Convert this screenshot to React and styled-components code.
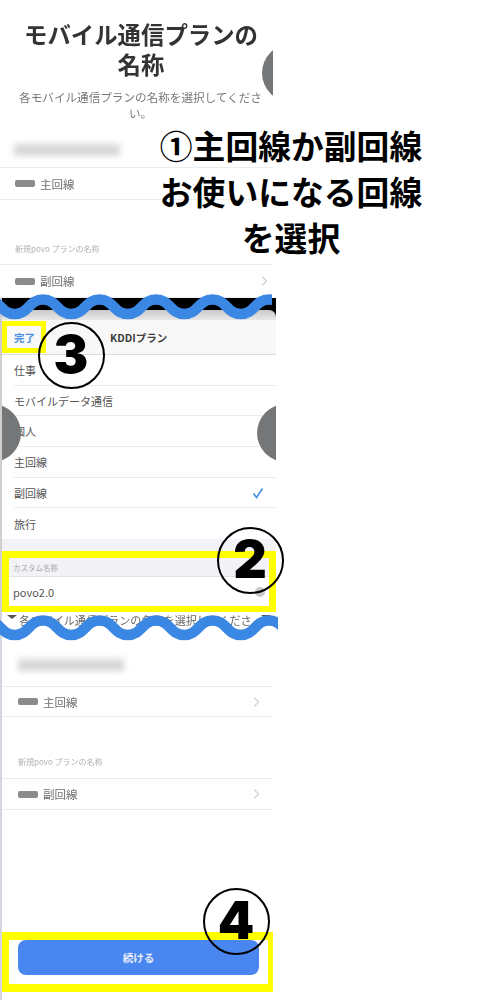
import React from "react";
import styled, { createGlobalStyle } from "styled-components";

const GlobalStyle = createGlobalStyle`
  html, body {
    margin: 0;
    background: #fff;
    font-family: "Noto Sans CJK JP", "Noto Sans", sans-serif;
  }
  * {
    box-sizing: border-box;
  }
`;

const Page = styled.div`
  position: relative;
  width: 500px;
  height: 1000px;
  overflow: hidden;
  background: #fff;
`;

const Shots = styled.div`
  display: flex;
  flex-direction: column;
  width: 276px;
`;

const ShotBlur = styled.div`
  filter: blur(0.45px);
`;

const TopShot = styled.section`
  position: relative;
  width: 273px;
  height: 298px;
  padding-top: 19px;
  overflow: hidden;
  background: #fff;
`;

const Title = styled.h1`
  margin: 0;
  padding-left: 9px;
  text-align: center;
  font-size: 23.4px;
  line-height: 30px;
  font-weight: 700;
  color: #333;
`;

const Sub = styled.p`
  margin: 10px 0 0;
  padding: 0 0 0 8px;
  text-align: center;
  font-size: 11.6px;
  line-height: 16px;
  color: #777;
  white-space: pre-line;
`;

const BlurBar = styled.div`
  width: 106px;
  height: 12px;
  margin: ${(p) => p.$margin};
  background: #c9c9c9;
  filter: blur(3px);
  opacity: 0.75;
`;

const PlanRow = styled.div`
  display: flex;
  align-items: center;
  height: ${(p) => p.$height}px;
  padding: 0 ${(p) => p.$right}px 0 ${(p) => p.$left}px;
  border-top: 1px solid #ececec;
  border-bottom: 1px solid #ececec;
  font-size: 11.5px;
  color: #6f6f6f;
`;

const Badge = styled.span`
  width: 20px;
  height: 7px;
  margin-right: 5px;
  border-radius: 2px;
  background: #8b8b8b;
`;

const PlanName = styled.span`
  flex: 1;
`;

const Chevron = styled.svg`
  width: 8px;
  height: 12px;
  fill: none;
  stroke: #d4d4d4;
  stroke-width: 1.3;
`;

const SmallLabel = styled.div`
  margin: ${(p) => p.$margin};
  font-size: 8px;
  line-height: 10px;
  color: #b0b0b0;
`;

const Modal = styled.section`
  position: relative;
  display: flex;
  flex-direction: column;
  height: 314px;
  overflow: hidden;
  background: #f2f2f7;
  border-left: 2px solid #cfcfcf;
`;

const ModalTop = styled.div`
  height: 22px;
  margin-left: -2px;
  padding-top: 12px;
  flex: none;
  background: #000;
`;

const ModalTopInner = styled.div`
  height: 10px;
  border-radius: 7px 7px 0 0;
  background: linear-gradient(#c9c9c9, #e8e8e8);
`;

const ModalHeader = styled.div`
  display: flex;
  align-items: center;
  flex: none;
  height: 35px;
  background: #f8f8f8;
  border-bottom: 1px solid #dcdcdc;
`;

const DoneButton = styled.div`
  display: flex;
  align-items: center;
  justify-content: center;
  width: 44px;
  height: 32px;
  padding-left: 1px;
  border: 5px solid #ffff00;
  font-size: 10.5px;
  font-weight: 700;
  color: #4a8fe0;
`;

const ModalTitle = styled.div`
  margin-left: 64px;
  font-size: 10.5px;
  font-weight: 700;
  color: #3d3d3d;
`;

const OptionList = styled.div`
  flex: none;
  padding-left: 12px;
  background: #fff;
`;

const Option = styled.div`
  display: flex;
  align-items: center;
  justify-content: space-between;
  height: 30.7px;
  padding-right: 12px;
  border-bottom: ${(p) => (p.$last ? "none" : "1px solid #ececec")};
  font-size: 11px;
  color: #555;
`;

const Check = styled.svg`
  width: 12px;
  height: 12px;
  fill: none;
  stroke: #4a8fe0;
  stroke-width: 1.6;
`;

const CustomField = styled.div`
  width: 274px;
  height: 62px;
  margin-top: 12px;
  flex: none;
  border: 7px solid #ffff00;
`;

const CustomLabel = styled.div`
  height: 19px;
  padding-left: 4px;
  border-bottom: 1px solid #e3e3e3;
  font-size: 7.5px;
  line-height: 19px;
  color: #a9a9a9;
`;

const CustomValue = styled.div`
  display: flex;
  align-items: center;
  justify-content: space-between;
  height: 29px;
  padding: 0 4px;
  background: #fff;
  font-size: 11px;
  color: #555;
`;

const ClearDot = styled.span`
  width: 10px;
  height: 10px;
  border-radius: 50%;
  background: #c8c8c8;
`;

const BottomShot = styled.section`
  position: relative;
  width: 273px;
  height: 388px;
  background: #fff;
  border-left: 2px solid #d6d6e0;
`;

const PeekLine = styled.div`
  position: relative;
  height: 28px;
  padding-right: 4px;
  text-align: center;
  font-size: 11.1px;
  line-height: 16px;
  color: #666;
  white-space: nowrap;
  overflow: hidden;

  &::before,
  &::after {
    content: "";
    position: absolute;
    top: 3px;
    border-top: 4px solid #555;
    border-left: 5px solid transparent;
    border-right: 5px solid transparent;
  }
  &::before {
    left: 5px;
  }
  &::after {
    right: 2px;
  }
`;

const ContinueBox = styled.div`
  position: absolute;
  left: 0;
  bottom: 8px;
  display: flex;
  width: 271px;
  height: 60px;
  padding: 0 9px 9px;
  border-style: solid;
  border-color: #ffff00;
  border-width: 8px 5px 8px 7px;
`;

const ContinueButton = styled.div`
  display: flex;
  align-items: center;
  justify-content: center;
  width: 100%;
  border-radius: 8px;
  background: #4a86ef;
  font-size: 10.5px;
  font-weight: 700;
  color: #e8eefc;
`;

const Blob = styled.div`
  position: absolute;
  left: ${(p) => p.$x - 29}px;
  top: ${(p) => p.$y - 29}px;
  width: 58px;
  height: 58px;
  border-radius: 50%;
  background: #757677;
`;

const WaveSvg = styled.svg`
  position: absolute;
  left: 0;
  top: ${(p) => p.$top}px;
  fill: none;
  stroke: #3b87e4;
  stroke-width: 10.5;
`;

const Callout = styled.div`
  position: absolute;
  left: 131px;
  top: 122px;
  width: 320px;
  text-align: center;
  font-size: 32.8px;
  line-height: 46px;
  font-weight: 700;
  color: #000;
  white-space: pre-line;
`;

const StepMark = styled.div`
  position: absolute;
  left: ${(p) => p.$x - 33.5}px;
  top: ${(p) => p.$y - 33.5}px;
  display: flex;
  align-items: center;
  justify-content: center;
  width: 67px;
  height: 67px;
  border: 2px solid #000;
  border-radius: 50%;
  font-family: "Inter", "Liberation Sans", sans-serif;
  font-size: 52px;
  font-weight: 900;
  line-height: 1;
  color: #000;
`;

const WAVE_HALF = 28.25;

// 山の位置 x=43 から逆算して左端の外から描き始める
const wavePath = (width, high, low) => {
  let x = -13.5;
  let up = true;
  let d = `M${x} ${high}`;
  while (x < width + WAVE_HALF) {
    const next = x + WAVE_HALF;
    const mid = x + WAVE_HALF / 2;
    const from = up ? high : low;
    const to = up ? low : high;
    d += ` C${mid} ${from} ${mid} ${to} ${next} ${to}`;
    x = next;
    up = !up;
  }
  return d;
};

const Wave = ({ top, width }) => (
  <WaveSvg $top={top} width={width} height="28" viewBox={`0 0 ${width} 28`}>
    <path d={wavePath(width, 5.5, 20)} />
  </WaveSvg>
);

const Arrow = () => (
  <Chevron viewBox="0 0 8 12">
    <path d="M2 1.5 6.5 6 2 10.5" />
  </Chevron>
);

const options = ["仕事", "モバイルデータ通信", "個人", "主回線", "副回線", "旅行"];

const App = () => {
  return (
    <Page>
      <GlobalStyle />
      <Shots>
        <TopShot>
          <ShotBlur>
            <Title>
              モバイル通信プランの
              <br />
              名称
            </Title>
            <Sub>{"各モバイル通信プランの名称を選択してくださ\nい。"}</Sub>
            <BlurBar $margin="23px 0 11px 14px" />
            <PlanRow $height={33} $left={15} $right={5}>
              <Badge />
              <PlanName>主回線</PlanName>
            </PlanRow>
            <SmallLabel $margin="44px 0 10px 15px">新規povo プランの名称</SmallLabel>
            <PlanRow $height={34} $left={15} $right={5}>
              <Badge />
              <PlanName>副回線</PlanName>
              <Arrow />
            </PlanRow>
          </ShotBlur>
          <Blob $x={291} $y={73} />
        </TopShot>

        <Modal>
          <ModalTop>
            <ModalTopInner />
          </ModalTop>
          <ModalHeader>
            <DoneButton>完了</DoneButton>
            <ModalTitle>KDDIプラン</ModalTitle>
          </ModalHeader>
          <OptionList>
            {options.map((name, i) => (
              <Option key={name} $last={i === options.length - 1}>
                {name}
                {name === "副回線" && (
                  <Check viewBox="0 0 12 12">
                    <path d="M1.5 6.5 4.5 10.5 10.5 1.5" />
                  </Check>
                )}
              </Option>
            ))}
          </OptionList>
          <CustomField>
            <CustomLabel>カスタム名称</CustomLabel>
            <CustomValue>
              povo2.0
              <ClearDot />
            </CustomValue>
          </CustomField>
          <Blob $x={-10} $y={135} />
          <Blob $x={284} $y={135} />
        </Modal>

        <BottomShot>
          <ShotBlur>
            <PeekLine>各モバイル通信プランの名称を選択してくださ</PeekLine>
            <BlurBar $margin="19px 0 15px 16px" />
            <PlanRow $height={31} $left={16} $right={13}>
              <Badge />
              <PlanName>主回線</PlanName>
              <Arrow />
            </PlanRow>
            <SmallLabel $margin="40px 0 11px 16px">新規povo プランの名称</SmallLabel>
            <PlanRow $height={32} $left={16} $right={13}>
              <Badge />
              <PlanName>副回線</PlanName>
              <Arrow />
            </PlanRow>
          </ShotBlur>
          <ContinueBox>
            <ContinueButton>続ける</ContinueButton>
          </ContinueBox>
        </BottomShot>
      </Shots>

      <Wave top={294} width={272} />
      <Wave top={615} width={278} />
      <Callout>{"①主回線か副回線\nお使いになる回線\nを選択"}</Callout>
      <StepMark $x={71} $y={355}>3</StepMark>
      <StepMark $x={250} $y={560}>2</StepMark>
      <StepMark $x={236} $y={921}>4</StepMark>
    </Page>
  );
};

export default App;
